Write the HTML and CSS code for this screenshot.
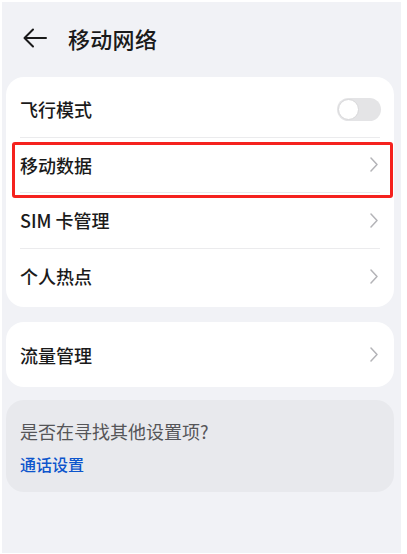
FILE: index.html
```html
<!DOCTYPE html>
<html lang="zh-CN">
<head>
<meta charset="utf-8">
<link rel="stylesheet" href="styles.css">
</head>
<body>
<div class="page">
  <header class="topbar">
    <svg class="back" width="24" height="20" viewBox="0 0 24 20"><path d="M23 10H2M10 1.5L1.5 10L10 18.5" fill="none" stroke="#1a1a1a" stroke-width="2" stroke-linecap="round" stroke-linejoin="round"/></svg>
    <h1 class="title">移动网络</h1>
  </header>

  <section class="card main-card">
    <div class="row"><span class="label">飞行模式</span><span class="switch"><span class="knob"></span></span></div>
    <div class="row"><span class="label">移动数据</span><svg class="chev" width="8" height="15" viewBox="0 0 8 15"><path d="M1 1L7 7.5L1 14" fill="none" stroke="#b4b4b8" stroke-width="1.5" stroke-linecap="round" stroke-linejoin="round"/></svg></div>
    <div class="row"><span class="label">SIM 卡管理</span><svg class="chev" width="8" height="15" viewBox="0 0 8 15"><path d="M1 1L7 7.5L1 14" fill="none" stroke="#b4b4b8" stroke-width="1.5" stroke-linecap="round" stroke-linejoin="round"/></svg></div>
    <div class="row last"><span class="label">个人热点</span><svg class="chev" width="8" height="15" viewBox="0 0 8 15"><path d="M1 1L7 7.5L1 14" fill="none" stroke="#b4b4b8" stroke-width="1.5" stroke-linecap="round" stroke-linejoin="round"/></svg></div>
    <div class="highlight"></div>
  </section>

  <section class="card single-card">
    <div class="row last"><span class="label">流量管理</span><svg class="chev" width="8" height="15" viewBox="0 0 8 15"><path d="M1 1L7 7.5L1 14" fill="none" stroke="#b4b4b8" stroke-width="1.5" stroke-linecap="round" stroke-linejoin="round"/></svg></div>
  </section>

  <section class="suggest">
    <p class="hint">是否在寻找其他设置项?</p>
    <a class="link">通话设置</a>
  </section>
</div>
</body>
</html>
```

FILE: styles.css
```css
* { box-sizing: border-box; }
html, body { margin: 0; padding: 0; background: #ffffff; }
body {
  font-family: "Noto Sans CJK SC", "Noto Sans", sans-serif;
  color: #1a1a1a;
  width: 407px;
  height: 554px;
  overflow: hidden;
}
.page {
  margin: 2px 6px 1px 2px;
  height: 551px;
  background: #f1f2f6;
  padding: 0 7px 0 4px;
}
.topbar {
  display: flex;
  align-items: center;
  height: 75px;
  padding: 0 0 3px 17px;
}
.back { display: block; }
.title {
  margin: 0 0 0 21px;
  font-size: 22px;
  font-weight: 500;
  line-height: 30px;
  letter-spacing: 0.3px;
}
.card {
  background: #ffffff;
  border-radius: 18px;
  position: relative;
}
.main-card { padding: 5px 0 3px; }
.single-card { margin-top: 15px; padding: 5px 0 4.5px; }
.row {
  display: flex;
  align-items: center;
  justify-content: space-between;
  height: 55.5px;
  margin: 0 14px;
  border-bottom: 1px solid #ebebed;
}
.row.last { border-bottom: none; }
.label {
  font-size: 18px;
  line-height: 24px;
  font-weight: 500;
}
.chev { display: block; margin-right: 2px; }
.switch {
  width: 44px;
  height: 23px;
  border-radius: 12px;
  background: #e4e4e6;
  position: relative;
  margin-right: -1px;
}
.knob {
  position: absolute;
  left: 1px;
  top: 1px;
  width: 21px;
  height: 21px;
  border-radius: 50%;
  background: #ffffff;
  border: 1px solid #d8d8da;
}
.highlight {
  position: absolute;
  left: 6px;
  top: 65px;
  width: 381px;
  height: 56px;
  border: 3px solid #f5221e;
  border-radius: 3px;
  pointer-events: none;
}
.suggest {
  margin-top: 13px;
  background: #e8e9ed;
  border-radius: 18px;
  padding: 18px 14px 16px;
  height: 92px;
}
.hint {
  margin: 0;
  font-size: 18px;
  line-height: 26px;
  color: #555558;
}
.link {
  display: block;
  margin-top: 9px;
  font-size: 16px;
  line-height: 22px;
  color: #0d55cc;
  font-weight: 500;
}
```
